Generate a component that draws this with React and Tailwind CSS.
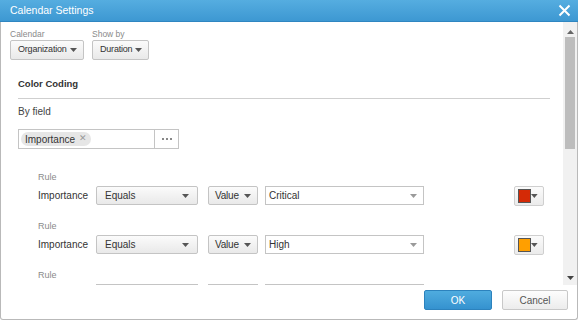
import React from "react";

const Caret = ({ className = "" }) => (
  <svg width="7" height="4" viewBox="0 0 7 4" className={className}>
    <path d="M0 0h7L3.5 4z" fill="#555" />
  </svg>
);

const DropBtn = ({ label, w }) => (
  <div
    className={`flex items-center h-[20px] ${w} pl-[7px] pr-[6px] border border-[#c4c4c4] rounded-[2px] bg-gradient-to-b from-[#fbfbfb] to-[#e9e9e9] text-[9px] tracking-[-0.2px] text-[#333]`}
  >
    <span className="whitespace-nowrap">{label}</span>
    <Caret className="ml-auto shrink-0" />
  </div>
);

const RuleRow = ({ value, color, last }) => (
  <div className="flex flex-col">
    <div className="pl-[37px] text-[9px] text-[#8a8a8a] h-[12px] leading-[12px]">Rule</div>
    {last ? (
      <div className="flex items-start h-[20px] mt-[3px]">
        <div className="w-[95px]" />
        <div className="w-[102px] border-t border-[#c4c4c4]" />
        <div className="w-[10px]" />
        <div className="w-[50px] border-t border-[#c4c4c4]" />
        <div className="w-[7px]" />
        <div className="w-[159px] border-t border-[#c4c4c4]" />
      </div>
    ) : (
      <div className="flex items-center h-[19px] mt-[3px]">
        <div className="w-[95px] pl-[37px] text-[10px] text-[#333]">Importance</div>
        <div className="flex items-center w-[102px] h-[19px] px-[8px] border border-[#c4c4c4] rounded-[2px] bg-gradient-to-b from-[#fbfbfb] to-[#e9e9e9] text-[10px] text-[#333]">
          <span>Equals</span>
          <Caret className="ml-auto" />
        </div>
        <div className="w-[10px]" />
        <div className="flex items-center w-[50px] h-[19px] pl-[6px] pr-[6px] border border-[#c4c4c4] rounded-[2px] bg-gradient-to-b from-[#fbfbfb] to-[#e9e9e9] text-[10px] tracking-[-0.2px] text-[#333]">
          <span>Value</span>
          <Caret className="ml-auto" />
        </div>
        <div className="w-[7px]" />
        <div className="flex items-center w-[159px] h-[19px] pl-[3px] pr-[6px] border border-[#c4c4c4] bg-white text-[10px] text-[#333]">
          <span>{value}</span>
          <svg width="7" height="4" viewBox="0 0 7 4" className="ml-auto">
            <path d="M0 0h7L3.5 4z" fill="#9a9a9a" />
          </svg>
        </div>
        <div className="w-[90px]" />
        <div className="flex items-center w-[30px] h-[20px] pl-[3px] pr-[5px] border border-[#cfcfcf] rounded-[2px] bg-gradient-to-b from-[#fbfbfb] to-[#ebebeb]">
          <div className={`w-[14px] h-[14px] border border-[#555] ${color}`} />
          <Caret className="ml-auto" />
        </div>
      </div>
    )}
  </div>
);

export default function App() {
  return (
    <div
      className="w-[578px] h-[321px] bg-white overflow-hidden"
      style={{ fontFamily: '"Liberation Sans", Arial, sans-serif' }}
    >
      <div className="flex flex-col w-[578px] h-[320px] border border-t-0 border-[#b9b9b9] rounded-b-[3px]">
        <div className="flex items-center h-[22px] -mx-px px-[10px] bg-gradient-to-b from-[#55ade0] to-[#3d98d2] border-b border-[#2f86c1]">
          <span className="text-[10.5px] text-white">Calendar Settings</span>
          <svg width="13" height="13" viewBox="0 0 13 13" className="ml-auto mr-[-3px]">
            <path d="M1.5 1.5l10 10M11.5 1.5l-10 10" stroke="white" strokeWidth="2" />
          </svg>
        </div>
        <div className="flex h-[263px]">
          <div className="flex-1 overflow-hidden">
            <div className="flex gap-[8px] pl-[9px] pt-[6px]">
              <div className="flex flex-col">
                <span className="text-[8.5px] text-[#8a8a8a] leading-[12px]">Calendar</span>
                <DropBtn label="Organization" w="w-[74px]" />
              </div>
              <div className="flex flex-col">
                <span className="text-[8.5px] text-[#8a8a8a] leading-[12px]">Show by</span>
                <DropBtn label="Duration" w="w-[57px]" />
              </div>
            </div>
            <div className="ml-[17px] mr-[13px] mt-[17px] pb-[7px] border-b border-[#cfcfcf] text-[9.5px] font-bold text-[#333] leading-[14px]">
              Color Coding
            </div>
            <div className="ml-[17px] mt-[6px] text-[10px] text-[#444] leading-[14px]">By field</div>
            <div className="flex ml-[17px] mt-[10px] w-[161px] h-[20px] border border-[#c4c4c4]">
              <div className="flex-1 flex items-center pl-[2px]">
                <div className="flex items-center h-[14px] px-[4px] rounded-[7px] bg-[#e6e6e6] text-[10px] text-[#333]">
                  Importance
                  <span className="ml-[4px] text-[9px] text-[#999]">✕</span>
                </div>
              </div>
              <div className="w-[24px] border-l border-[#c4c4c4] flex items-center justify-center gap-[2px]">
                <div className="w-[2px] h-[2px] bg-[#888]" />
                <div className="w-[2px] h-[2px] bg-[#888]" />
                <div className="w-[2px] h-[2px] bg-[#888]" />
              </div>
            </div>
            <div className="flex flex-col gap-[15px] mt-[22px]">
              <RuleRow value="Critical" color="bg-[#d42a06]" />
              <RuleRow value="High" color="bg-[#ff9f00]" />
              <RuleRow last />
            </div>
          </div>
          <div className="w-[14px] bg-[#f1f1f1] flex flex-col items-center">
            <svg width="7" height="4" viewBox="0 0 7 4" className="mt-[8px]">
              <path d="M0 4h7L3.5 0z" fill="#666" />
            </svg>
            <div className="w-[10px] h-[112px] mt-[3px] bg-[#bdbdbd]" />
            <svg width="7" height="4" viewBox="0 0 7 4" className="mt-auto mb-[5px]">
              <path d="M0 0h7L3.5 4z" fill="#444" />
            </svg>
          </div>
        </div>
        <div className="flex items-center justify-end gap-[10px] pr-[9px] pt-[5px]">
          <div className="w-[68px] h-[20px] flex items-center justify-center rounded-[2px] border border-[#2c82bd] bg-gradient-to-b from-[#4facdf] to-[#3592cf] text-[10px] text-white">
            OK
          </div>
          <div className="w-[66px] h-[20px] flex items-center justify-center rounded-[2px] border border-[#c8c8c8] bg-gradient-to-b from-[#fdfdfd] to-[#ececec] text-[10px] text-[#555]">
            Cancel
          </div>
        </div>
      </div>
    </div>
  );
}
